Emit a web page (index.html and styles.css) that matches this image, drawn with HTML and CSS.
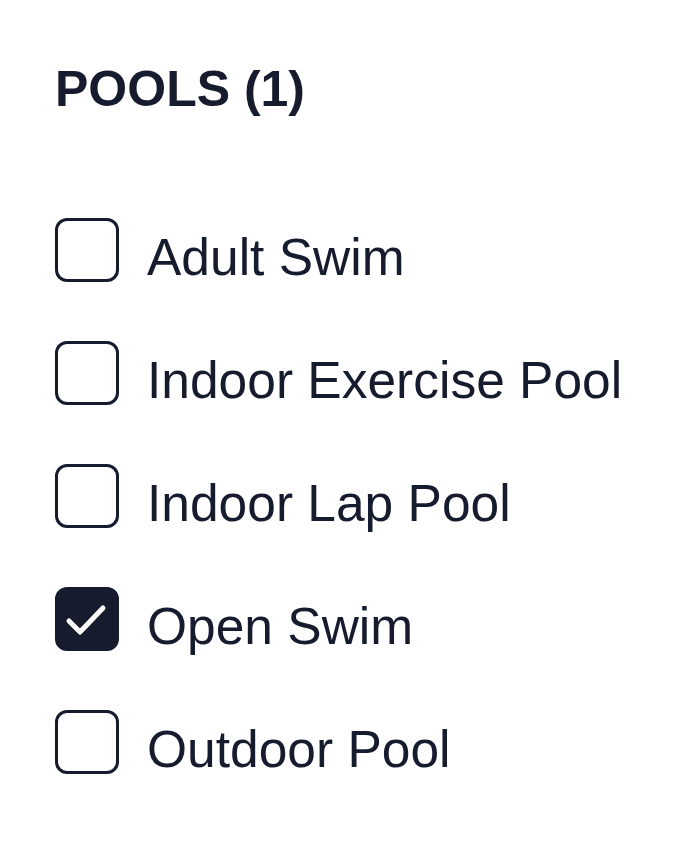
FILE: index.html
```html
<!DOCTYPE html>
<html lang="en">
<head>
  <meta charset="UTF-8">
  <meta name="viewport" content="width=device-width, initial-scale=1.0">
  <title>Pools Filter</title>
  <link rel="stylesheet" href="styles.css">
</head>
<body>
  <div class="filter-group">
    <h2 class="filter-title">POOLS (1)</h2>
    <ul class="option-list">
      <li class="option">
        <span class="checkbox"></span>
        <span class="option-label">Adult Swim</span>
      </li>
      <li class="option">
        <span class="checkbox"></span>
        <span class="option-label">Indoor Exercise Pool</span>
      </li>
      <li class="option">
        <span class="checkbox"></span>
        <span class="option-label">Indoor Lap Pool</span>
      </li>
      <li class="option">
        <span class="checkbox checked">
          <svg viewBox="0 0 64 64" width="64" height="64">
            <path d="M14 34 L25 45 L48 21" fill="none" stroke="#fff" stroke-width="5" stroke-linecap="round" stroke-linejoin="round"/>
          </svg>
        </span>
        <span class="option-label">Open Swim</span>
      </li>
      <li class="option">
        <span class="checkbox"></span>
        <span class="option-label">Outdoor Pool</span>
      </li>
    </ul>
  </div>
</body>
</html>
```

FILE: styles.css
```css
body {
  margin: 0;
  background: #ffffff;
  font-family: 'Liberation Sans', Arial, sans-serif;
  color: #161b2e;
}

.filter-group {
  padding: 60px 55px;
}

.filter-title {
  margin: 0 0 100px;
  font-size: 50px;
  font-weight: bold;
  line-height: normal;
}

.option-list {
  list-style: none;
  margin: 0;
  padding: 0;
  display: flex;
  flex-direction: column;
  gap: 59px;
}

.option {
  display: flex;
  align-items: flex-start;
  gap: 28px;
  height: 64px;
}

.checkbox {
  box-sizing: border-box;
  flex: none;
  width: 64px;
  height: 64px;
  border: 3px solid #161b2e;
  border-radius: 12px;
  position: relative;
}

.checkbox.checked {
  background: #161b2e;
}

.checkbox svg {
  position: absolute;
  top: -3px;
  left: -3px;
}

.option-label {
  font-size: 51.5px;
  line-height: 64px;
  padding-top: 7px;
  white-space: nowrap;
}
```
